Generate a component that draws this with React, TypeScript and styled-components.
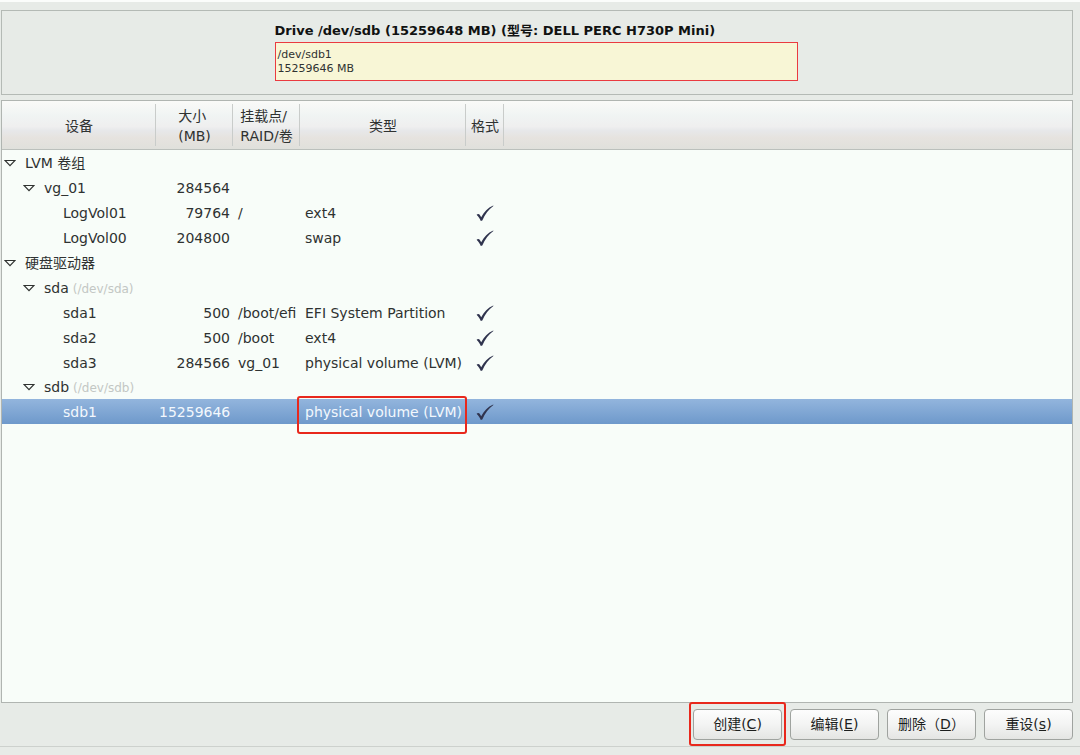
import React, { useState } from "react";
import styled, { createGlobalStyle, css } from "styled-components";

const GlobalStyle = createGlobalStyle`
  *, *::before, *::after { box-sizing: border-box; }
  body {
    margin: 0;
    background: #e7ebe7;
    color: #2f3231;
    font: 14px/20px "DejaVu Sans", "Noto Sans CJK SC", sans-serif;
  }
`;

const Page = styled.div`
  display: flex;
  flex-direction: column;
  min-height: 100vh;
  border-top: 2px solid #fbfdfb;
`;

const Main = styled.main`
  flex: 1;
  display: flex;
  flex-direction: column;
  gap: 5px;
  padding: 8px 7px 0 1px;
`;

const DrivePanel = styled.section`
  display: flex;
  justify-content: center;
  padding: 10px 18px 13px 16px;
  border: 1px solid #b4bab5;
`;

const Drive = styled.div`
  width: 523px;
  max-width: 100%;
`;

const DriveTitle = styled.h1`
  margin: 0;
  padding-bottom: 1px;
  font-size: 13px;
  line-height: 20px;
  color: #101211;
`;

const Partition = styled.div`
  padding: 5px 2px 4px;
  border: 1px solid #ea3b40;
  background: #f8f6d6;
  font-size: 11px;
  line-height: 14px;
`;

const TreePanel = styled.section`
  flex: 1;
  border: 1px solid #b0b5b1;
  background: #f8fdf9;
`;

const Table = styled.table`
  width: 100%;
  table-layout: fixed;
  border-collapse: separate;
  border-spacing: 0;
`;

const Col = styled.col<{ $w?: number }>`
  ${(p) => p.$w && `width: ${p.$w}px;`}
`;

const HeadRow = styled.tr`
  height: 49px;
  background: linear-gradient(#fafaf8 0%, #f0f4f3 30%, #efefef 52%, #e7e8ea 60%, #e6e3df 75%, #dfe0db 100%);
`;

const HeadCell = styled.th<{ $last?: boolean }>`
  padding: 3px 0 2px;
  border-bottom: 1px solid #bbc0bc;
  font-weight: normal;
  white-space: nowrap;
  vertical-align: middle;
  ${(p) =>
    !p.$last &&
    css`
      background: linear-gradient(#c9ccca, #c9ccca) right center / 1px 42px no-repeat;
    `}
`;

const HeadLabel = styled.span`
  display: inline-block;
  text-align: left;
`;

type Kind = "group" | "disk" | "leaf";
const rowHeight: Record<Kind, number> = { group: 26, disk: 24, leaf: 25 };
const indent: Record<Kind, number> = { group: 2, disk: 21, leaf: 61 };

const Row = styled.tr<{ $kind: Kind; $selected: boolean }>`
  height: ${(p) => rowHeight[p.$kind]}px;
  ${(p) =>
    p.$selected &&
    css`
      background: linear-gradient(#93b5dd, #6e99cb);
      color: #f3f8fd;
    `}
`;

const Cell = styled.td<{ $align?: "left" | "right" | "center" }>`
  position: relative;
  padding: 0 3px 0 ${(p) => (p.$align === "left" || !p.$align ? 5 : 3)}px;
  white-space: nowrap;
  vertical-align: middle;
  text-align: ${(p) => p.$align || "left"};
`;

const NameBox = styled.div<{ $kind: Kind }>`
  display: flex;
  align-items: center;
  margin-left: -5px;
  padding-left: ${(p) => indent[p.$kind]}px;
`;

const Expander = styled.button`
  display: flex;
  width: 12px;
  height: 12px;
  margin-right: 9px;
  padding: 0;
  border: 0;
  background: none;
`;

const Triangle = styled.svg<{ $open: boolean }>`
  transform: rotate(${(p) => (p.$open ? 0 : -90)}deg);
`;

const Path = styled.small`
  margin-left: 4px;
  padding-top: 2px;
  font-size: 12px;
  color: #c3c7c4;
`;

const Tick = styled.svg`
  display: block;
  margin: 0 auto;
`;

const CellMark = styled.span`
  position: absolute;
  inset: -3px -1px -10px -3px;
  border: 2px solid #e8281c;
  border-radius: 3px;
  pointer-events: none;
`;

const Actions = styled.div`
  display: flex;
  justify-content: flex-end;
  gap: 8px;
  padding: 6px 7px 6px;
  border-bottom: 1px solid #cdd1cd;
  margin-bottom: 8px;
`;

const ActionSlot = styled.div`
  position: relative;
`;

const ActionMark = styled.span`
  position: absolute;
  inset: -7px -4px -6px;
  border: 2px solid #e8281c;
  border-radius: 3px;
  pointer-events: none;
`;

const Action = styled.button`
  display: block;
  width: 89px;
  height: 31px;
  padding: 0 0 2px;
  border: 1px solid #9fa39f;
  border-radius: 4px;
  background: linear-gradient(#fdfdfd, #f3f4f3 50%, #e4e5e3);
  color: #1c1e1d;
  font: inherit;
  white-space: nowrap;
  text-spacing-trim: space-all;
`;

interface Item {
  id: string;
  parent?: string;
  kind: Kind;
  path?: string;
  size?: string;
  mount?: string;
  type?: string;
  format?: boolean;
  marked?: boolean;
}

const items: Item[] = [
  { id: "LVM 卷组", kind: "group" },
  { id: "vg_01", parent: "LVM 卷组", kind: "disk", size: "284564" },
  { id: "LogVol01", parent: "vg_01", kind: "leaf", size: "79764", mount: "/", type: "ext4", format: true },
  { id: "LogVol00", parent: "vg_01", kind: "leaf", size: "204800", type: "swap", format: true },
  { id: "硬盘驱动器", kind: "group" },
  { id: "sda", parent: "硬盘驱动器", kind: "disk", path: "(/dev/sda)" },
  { id: "sda1", parent: "sda", kind: "leaf", size: "500", mount: "/boot/efi", type: "EFI System Partition", format: true },
  { id: "sda2", parent: "sda", kind: "leaf", size: "500", mount: "/boot", type: "ext4", format: true },
  { id: "sda3", parent: "sda", kind: "leaf", size: "284566", mount: "vg_01", type: "physical volume (LVM)", format: true },
  { id: "sdb", parent: "硬盘驱动器", kind: "disk", path: "(/dev/sdb)" },
  { id: "sdb1", parent: "sdb", kind: "leaf", size: "15259646", type: "physical volume (LVM)", format: true, marked: true },
];

const byId = new Map(items.map((i) => [i.id, i]));

export default function App() {
  const [closed, setClosed] = useState<string[]>([]);
  const [selected, setSelected] = useState("sdb1");

  const hidden = (item: Item): boolean => {
    if (!item.parent) return false;
    return closed.includes(item.parent) || hidden(byId.get(item.parent)!);
  };
  const toggle = (id: string) =>
    setClosed((c) => (c.includes(id) ? c.filter((x) => x !== id) : [...c, id]));

  return (
    <Page>
      <GlobalStyle />
      <Main>
        <DrivePanel>
          <Drive>
            <DriveTitle>Drive /dev/sdb (15259648 MB) (型号: DELL PERC H730P Mini)</DriveTitle>
            <Partition>
              /dev/sdb1
              <br />
              15259646 MB
            </Partition>
          </Drive>
        </DrivePanel>
        <TreePanel>
          <Table>
            <colgroup>
              <Col $w={154} />
              <Col $w={77} />
              <Col $w={67} />
              <Col $w={166} />
              <Col $w={38} />
              <Col />
            </colgroup>
            <thead>
              <HeadRow>
                <HeadCell scope="col">设备</HeadCell>
                <HeadCell scope="col">
                  <HeadLabel>大小<br />(MB)</HeadLabel>
                </HeadCell>
                <HeadCell scope="col">
                  <HeadLabel>挂载点/<br />RAID/卷</HeadLabel>
                </HeadCell>
                <HeadCell scope="col">类型</HeadCell>
                <HeadCell scope="col">格式</HeadCell>
                <HeadCell as="td" $last />
              </HeadRow>
            </thead>
            <tbody>
              {items.filter((i) => !hidden(i)).map((i) => (
                <Row key={i.id} $kind={i.kind} $selected={i.id === selected} onClick={() => setSelected(i.id)}>
                  <Cell>
                    <NameBox $kind={i.kind}>
                      {i.kind !== "leaf" && (
                        <Expander aria-label={i.id} aria-expanded={!closed.includes(i.id)} onClick={() => toggle(i.id)}>
                          <Triangle $open={!closed.includes(i.id)} width="12" height="12" viewBox="0 0 12 12">
                            <path d="M1 3.5H11L6 8.7Z" fill="#f8fdf9" stroke="#303331" strokeWidth="1.2" />
                          </Triangle>
                        </Expander>
                      )}
                      {i.id}
                      {i.path && <Path>{i.path}</Path>}
                    </NameBox>
                  </Cell>
                  <Cell $align="right">{i.size}</Cell>
                  <Cell>{i.mount}</Cell>
                  <Cell>
                    {i.type}
                    {i.marked && <CellMark />}
                  </Cell>
                  <Cell $align="center">
                    {i.format && (
                      <Tick width="18" height="18" viewBox="0 0 18 18" role="img" aria-label="格式化">
                        <path
                          d="M0.6 10.8C1.6 9.6 3 9.6 3.7 10.8L5.2 13.2C8 8 11.8 3.8 17.2 1.4L17.4 1.9C12.9 5 9 10 6.3 16.6L4.8 17C3.8 14.8 2.6 12.6 0.6 10.8Z"
                          fill="#30344e"
                        />
                      </Tick>
                    )}
                  </Cell>
                  <Cell />
                </Row>
              ))}
            </tbody>
          </Table>
        </TreePanel>
      </Main>
      <Actions>
        <ActionSlot>
          <Action>创建(<u>C</u>)</Action>
          <ActionMark />
        </ActionSlot>
        <Action>编辑(<u>E</u>)</Action>
        <Action>删除（<u>D</u>）</Action>
        <Action>重设(<u>s</u>)</Action>
      </Actions>
    </Page>
  );
}
